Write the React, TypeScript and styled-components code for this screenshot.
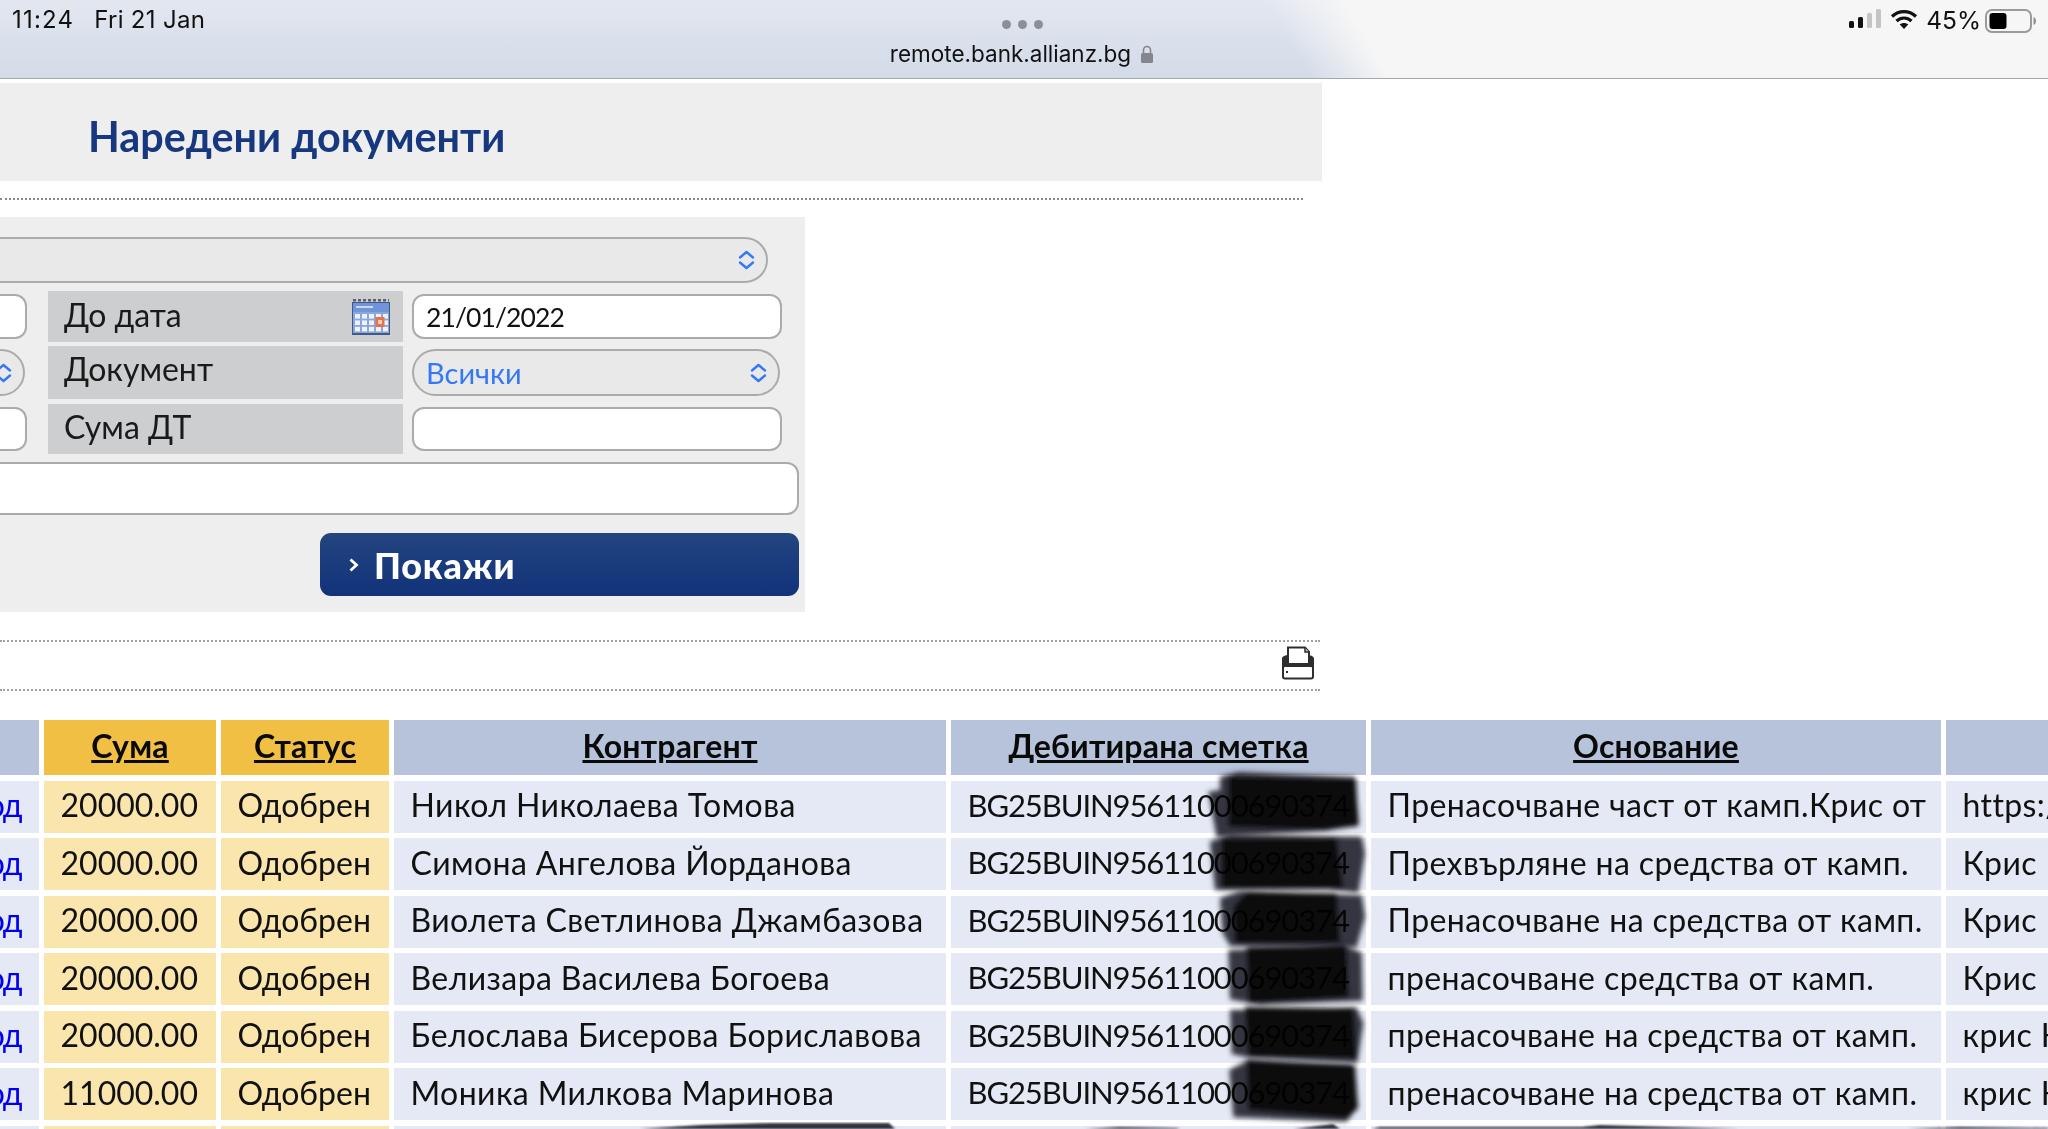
import React from 'react';
import styled, { createGlobalStyle } from 'styled-components';

const FONT = `Lato, "Open Sans", "Noto Sans", sans-serif`;
const UI_FONT = `Inter, "Liberation Sans", sans-serif`;

const GlobalStyle = createGlobalStyle`
  html, body {
    margin: 0;
    padding: 0;
    width: 2048px;
    height: 1129px;
    overflow: hidden;
    background: #fff;
  }
  * {
    box-sizing: border-box;
  }
`;

const Page = styled.div`
  width: 2048px;
  height: 1129px;
  overflow: hidden;
  font-family: ${FONT};
  color: #111;
`;

const StatusBar = styled.header`
  height: 79px;
  padding: 0 11px 0 12px;
  display: grid;
  grid-template-columns: 1fr auto 1fr;
  border-bottom: 1px solid #a4a8b0;
  background:
    linear-gradient(60deg, rgba(246, 246, 246, 0) 62.6%, #f6f6f6 66.4%),
    linear-gradient(180deg, #e3e7f0 0%, #d2dbe8 100%);
  font-family: ${UI_FONT};
  font-size: 22.5px;
  color: #111;
`;

const StatusLeft = styled.div`
  display: flex;
  gap: 20px;
  padding-top: 7px;
  font-size: 24px;
  letter-spacing: 0.3px;
  line-height: 26px;
`;

const StatusTime = styled.span`
  letter-spacing: 1.2px;
`;

const AddressBlock = styled.div`
  margin-right: 5px;
  display: flex;
  flex-direction: column;
  align-items: center;
`;

const Dots = styled.div`
  display: flex;
  gap: 7px;
  margin-top: 20px;
`;

const Dot = styled.span`
  width: 9px;
  height: 9px;
  border-radius: 50%;
  background: #8c8f98;
`;

const Address = styled.div`
  display: flex;
  align-items: center;
  gap: 9px;
  margin-top: 11px;
  line-height: 28px;
`;

const StatusRight = styled.div`
  display: flex;
  justify-content: flex-end;
  align-items: flex-start;
  padding-top: 9px;
  gap: 8px;
  font-size: 24.5px;
  line-height: 23px;
`;

const BatteryGap = styled.span`
  margin-right: -4px;
`;

const Content = styled.main`
  padding-top: 4px;
`;

const TitleBar = styled.div`
  width: 1322px;
  height: 98px;
  padding: 7px 0 0 88px;
  display: flex;
  align-items: center;
  background: #eeeeee;
`;

const Title = styled.h1`
  margin: 0;
  font-size: 41.3px;
  font-weight: 700;
  color: #17387e;
`;

const DottedLine = styled.div<{ $width: number; $top: number; $color?: string }>`
  width: ${(p) => p.$width}px;
  margin-top: ${(p) => p.$top}px;
  border-top: 2px dotted ${(p) => p.$color ?? '#8a8a8a'};
`;

const FormPanel = styled.section`
  width: 805px;
  margin-top: 17px;
  padding: 20px 0 16px;
  background: #eeeeee;
  overflow: hidden;
  display: flex;
  flex-direction: column;
`;

const FormRow = styled.div<{ $height: number; $top: number; $right: number }>`
  height: ${(p) => p.$height}px;
  margin-top: ${(p) => p.$top}px;
  padding-right: ${(p) => p.$right}px;
  display: flex;
  justify-content: flex-end;
  align-items: center;
  flex-shrink: 0;
`;

const Field = styled.div<{ $width: number; $height: number; $right?: number }>`
  width: ${(p) => p.$width}px;
  height: ${(p) => p.$height}px;
  margin-right: ${(p) => p.$right ?? 0}px;
  padding: 0 12px;
  flex-shrink: 0;
  display: flex;
  align-items: center;
  border: 2px solid #ababab;
  border-radius: 12px;
  background: #fff;
  font-size: 26.5px;
  letter-spacing: -0.9px;
`;

const SelectField = styled(Field)`
  justify-content: space-between;
  border-radius: 24px;
  padding-right: 10px;
  background: #e9e9e9;
  color: #3478f6;
  font-size: 29px;
  letter-spacing: 0;
`;

const FieldLabel = styled.div<{ $lift?: number }>`
  width: 355px;
  height: 100%;
  margin-right: 9px;
  padding: 0 13px ${(p) => p.$lift ?? 5}px 16px;
  flex-shrink: 0;
  display: flex;
  justify-content: space-between;
  align-items: center;
  background: #cdced0;
  font-size: 32px;
  color: #1a1a1a;
`;

const ShowButton = styled.button`
  width: 479px;
  height: 63px;
  padding: 0 0 0 28px;
  display: flex;
  align-items: center;
  gap: 15px;
  border: 0;
  border-radius: 11px;
  background: linear-gradient(180deg, #23457f 0%, #12327a 100%);
  color: #fff;
  font-family: ${FONT};
  font-size: 36px;
  font-weight: 900;
  letter-spacing: 0.8px;
`;

const Toolbar = styled.div`
  width: 1320px;
  height: 47px;
  padding: 0 5px 6px 0;
  display: flex;
  justify-content: flex-end;
  align-items: center;
`;

const TableWrap = styled.div`
  position: relative;
  margin-top: 29px;
  width: 2048px;
  height: 409px;
  overflow: hidden;
`;

const Table = styled.div`
  display: grid;
  grid-template-columns: 39px 172px 168px 552px 415px 570px 200px;
  grid-template-rows: 55px;
  grid-auto-rows: 52px;
  column-gap: 5px;
  row-gap: 5.5px;
`;

const HeadCell = styled.div<{ $sorted?: boolean }>`
  padding-bottom: 4px;
  display: flex;
  justify-content: center;
  align-items: center;
  background: ${(p) => (p.$sorted ? '#f2bf45' : '#b7c3da')};
  font-size: 32px;
  font-weight: 700;
  letter-spacing: 0.2px;
  text-decoration: underline;
  color: #0a0a0a;
`;

const Cell = styled.div<{ $sorted?: boolean; $end?: boolean; $kind?: 'text' | 'account' }>`
  padding: 0 ${(p) => (p.$end ? 18 : 0)}px 4px ${(p) => (p.$end ? 0 : 16.5)}px;
  display: flex;
  justify-content: ${(p) => (p.$end ? 'flex-end' : 'flex-start')};
  align-items: center;
  white-space: nowrap;
  overflow: hidden;
  background: ${(p) => (p.$sorted ? '#fae5ac' : '#e5e9f5')};
  font-size: ${(p) => (p.$kind === 'account' ? 31 : 32)}px;
  letter-spacing: ${(p) => (p.$kind === 'account' ? '-1.1px' : p.$kind === 'text' ? '0.4px' : '0')};
  color: #111;
`;

const DocLink = styled.a`
  color: #0000ee;
  letter-spacing: -1.5px;
  text-decoration: underline;
`;

const InkLayer = styled.svg`
  position: absolute;
  top: 0;
  left: 0;
  pointer-events: none;
  mix-blend-mode: multiply;
`;

const rows = [
  { sum: '20000.00', name: 'Никол Николаева Томова', reason: 'Пренасочване част от камп.Крис от', note: 'https://www' },
  { sum: '20000.00', name: 'Симона Ангелова Йорданова', reason: 'Прехвърляне на средства от камп.', note: 'Крис Николова' },
  { sum: '20000.00', name: 'Виолета Светлинова Джамбазова', reason: 'Пренасочване на средства от камп.', note: 'Крис Николова' },
  { sum: '20000.00', name: 'Велизара Василева Богоева', reason: 'пренасочване средства от камп.', note: 'Крис Николова' },
  { sum: '20000.00', name: 'Белослава Бисерова Бориславова', reason: 'пренасочване на средства от камп.', note: 'крис Николова' },
  { sum: '11000.00', name: 'Моника Милкова Маринова', reason: 'пренасочване на средства от камп.', note: 'крис Николова' },
];

// marker strokes over the account numbers, coords taken from a 3x crop at (1180,760)
const inkStrokes = [
  { outer: 'M85 95L120 90L120 50L175 36L525 50L538 195L440 212L110 232Z', inner: 'M145 48L528 58L534 198L430 210L145 200Z' },
  { outer: 'M90 245L150 222L545 230L555 280L535 398L440 388L105 390Z', inner: 'M125 235L470 235L490 385L125 385Z' },
  { outer: 'M120 415L180 392L545 406L555 470L530 562L150 558L128 520Z', inner: 'M200 396L470 400L480 548L165 550L160 440Z' },
  { outer: 'M145 570L490 552L545 578L548 722L240 734L150 718Z', inner: 'M200 560L500 555L505 712L205 730Z' },
  { outer: 'M150 750L530 742L550 790L532 908L200 892L155 882Z', inner: 'M195 740L520 745L530 895L205 890Z' },
  { outer: 'M148 930L200 902L515 912L534 1040L500 1085L160 1072Z', inner: 'M200 898L525 916L534 1045L500 1075L205 1050Z' },
];

const inkEdges = [
  'M640 409L700 405L771 403L889 403L895 409Z',
  'M1085 409L1120 407L1176 408L1180 409Z',
  'M1294 409L1333 404L1340 409Z',
  'M1372 409L1380 407L1582 407L1600 405L1739 409Z',
  'M1908 409L1960 407L2048 408L2048 409Z',
];

const Chevrons = ({ width = 19 }: { width?: number }) => (
  <svg width={width} height="20" viewBox="0 0 19 20" fill="none" stroke="#3478f6" strokeWidth="2.4" strokeLinecap="round" strokeLinejoin="round">
    <path d="M3 7.5L9.5 2L16 7.5" />
    <path d="M3 12.5L9.5 18L16 12.5" />
  </svg>
);

const LockIcon = () => (
  <svg width="14" height="18" viewBox="0 0 14 18">
    <path d="M3.5 8V5a3.5 3.5 0 0 1 7 0v3" fill="none" stroke="#85868c" strokeWidth="1.6" />
    <rect x="1" y="8" width="12" height="10" rx="1.5" fill="#85868c" />
  </svg>
);

const SignalIcon = () => (
  <svg width="33" height="20" viewBox="0 0 33 20">
    <rect x="0" y="12" width="5" height="7" rx="1.5" fill="#111" />
    <rect x="9" y="8" width="5" height="11" rx="1.5" fill="#111" />
    <rect x="18" y="4" width="5" height="15" rx="1.5" fill="#c4c4c4" />
    <rect x="27" y="0" width="5" height="19" rx="1.5" fill="#c4c4c4" />
  </svg>
);

const WifiIcon = () => (
  <svg width="28" height="20" viewBox="0 0 28 20" fill="none" stroke="#111" strokeWidth="3.2">
    <path d="M2 7.5C9 1 19 1 26 7.5" />
    <path d="M6.5 12C11 8 17 8 21.5 12" />
    <path d="M14 20L9.8 15.6C12 13.6 16 13.6 18.2 15.6Z" fill="#111" stroke="none" />
  </svg>
);

const BatteryIcon = () => (
  <svg width="52" height="24" viewBox="0 0 52 24">
    <rect x="1" y="1" width="45" height="22" rx="6" fill="none" stroke="#9a9a9a" strokeWidth="2" />
    <rect x="4.5" y="4" width="17" height="16" rx="3" fill="#000" />
    <path d="M48.5 8C50.5 9 51 10.5 51 12S50.5 15 48.5 16Z" fill="#8f8f8f" />
  </svg>
);

const CalendarIcon = () => (
  <svg width="38" height="36" viewBox="0 0 38 36" style={{ marginBottom: -5 }}>
    <rect x="0" y="3" width="38" height="33" fill="#3f5a88" />
    <rect x="1" y="4" width="36" height="9" fill="#6f94da" />
    <rect x="1" y="13" width="36" height="21" fill="#8aa6dc" />
    <path d="M1 1h36" stroke="#5c5f66" strokeWidth="3" strokeDasharray="3 2" />
    <rect x="4" y="7" width="17" height="2" fill="#c9d8f4" />
    {[0, 1, 2].map((r) =>
      [0, 1, 2, 3, 4].map((c) => <rect key={`${r}-${c}`} x={3 + c * 7} y={15 + r * 6.4} width="5" height="4.6" fill="#eef2fb" />)
    )}
    <rect x="23.5" y="18" width="9" height="10" fill="#e8734a" />
    <rect x="26" y="21" width="4" height="4" fill="#f3cfc0" />
  </svg>
);

const PrinterIcon = () => (
  <svg width="34" height="34" viewBox="0 0 34 34">
    <path d="M1 28V13C1 11 2 10 6 9V20H28V9C32 10 33 11 33 13V28Z" fill="#2e2e2e" />
    <path d="M7 1.5H24L28 6V18H7Z" fill="#fff" stroke="#2e2e2e" strokeWidth="2" />
    <path d="M24 1.5V6H28" fill="#c8c8c8" stroke="#2e2e2e" strokeWidth="1.5" />
    <rect x="2" y="20" width="30" height="12.5" rx="2" fill="#fff" stroke="#2e2e2e" strokeWidth="2" />
    <rect x="5" y="25" width="2" height="2" fill="#2e2e2e" />
  </svg>
);

const ButtonChevron = () => (
  <svg width="11" height="14" viewBox="0 0 11 14" fill="none" stroke="#fff" strokeWidth="2.8">
    <path d="M2.5 1.5L8.5 7L2.5 12.5" />
  </svg>
);

export default function App() {
  return (
    <Page>
      <GlobalStyle />
      <StatusBar>
        <StatusLeft>
          <StatusTime>11:24</StatusTime>
          <span>Fri 21 Jan</span>
        </StatusLeft>
        <AddressBlock>
          <Dots>
            <Dot />
            <Dot />
            <Dot />
          </Dots>
          <Address>
            remote.bank.allianz.bg
            <LockIcon />
          </Address>
        </AddressBlock>
        <StatusRight>
          <SignalIcon />
          <WifiIcon />
          <BatteryGap>45%</BatteryGap>
          <BatteryIcon />
        </StatusRight>
      </StatusBar>

      <Content>
        <TitleBar>
          <Title>Наредени документи</Title>
        </TitleBar>
        <DottedLine $width={1303} $top={17} />

        <FormPanel>
          <FormRow $height={46} $top={0} $right={37}>
            <SelectField $width={900} $height={46}>
              <span />
              <Chevrons />
            </SelectField>
          </FormRow>
          <FormRow $height={51} $top={8} $right={23}>
            <Field $width={60} $height={45} $right={21} />
            <FieldLabel>
              До дата
              <CalendarIcon />
            </FieldLabel>
            <Field $width={370} $height={45}>21/01/2022</Field>
          </FormRow>
          <FormRow $height={53} $top={4} $right={25}>
            <SelectField $width={60} $height={47} $right={23}>
              <span />
              <Chevrons />
            </SelectField>
            <FieldLabel $lift={8}>Документ</FieldLabel>
            <SelectField $width={368} $height={47}>
              Всички
              <Chevrons />
            </SelectField>
          </FormRow>
          <FormRow $height={50} $top={5} $right={23}>
            <Field $width={60} $height={44} $right={21} />
            <FieldLabel>Сума ДТ</FieldLabel>
            <Field $width={370} $height={44} />
          </FormRow>
          <FormRow $height={53} $top={8} $right={6}>
            <Field $width={900} $height={53} />
          </FormRow>
          <FormRow $height={63} $top={18} $right={6}>
            <ShowButton>
              <ButtonChevron />
              Покажи
            </ShowButton>
          </FormRow>
        </FormPanel>

        <DottedLine $width={1320} $top={28} $color="#a0a0a0" />
        <Toolbar>
          <PrinterIcon />
        </Toolbar>
        <DottedLine $width={1320} $top={0} $color="#a0a0a0" />

        <TableWrap>
          <Table>
            <HeadCell />
            <HeadCell $sorted>Сума</HeadCell>
            <HeadCell $sorted>Статус</HeadCell>
            <HeadCell>Контрагент</HeadCell>
            <HeadCell>Дебитирана сметка</HeadCell>
            <HeadCell>Основание</HeadCell>
            <HeadCell />
            {rows.map((row, i) => (
              <React.Fragment key={i}>
                <Cell $end>
                  <DocLink>Превод</DocLink>
                </Cell>
                <Cell $sorted $end>{row.sum}</Cell>
                <Cell $sorted>Одобрен</Cell>
                <Cell $kind="text">{row.name}</Cell>
                <Cell $kind="account">BG25BUIN95611000690374</Cell>
                <Cell $kind="text">{row.reason}</Cell>
                <Cell $kind="text">{row.note}</Cell>
              </React.Fragment>
            ))}
            <Cell />
            <Cell $sorted />
            <Cell $sorted />
            <Cell />
            <Cell />
            <Cell />
            <Cell />
          </Table>
          <InkLayer width="2048" height="409" viewBox="0 0 2048 409">
            <defs>
              <filter id="ink" x="-10%" y="-10%" width="120%" height="120%">
                <feGaussianBlur stdDeviation="8" />
              </filter>
              <filter id="edge">
                <feGaussianBlur stdDeviation="0.8" />
              </filter>
            </defs>
            <g transform="translate(1180 40) scale(0.3333)">
              {inkStrokes.map((stroke, i) => (
                <g key={i} filter="url(#ink)">
                  <path d={stroke.outer} fill="#2e2f38" opacity="0.95" />
                  <path d={stroke.inner} fill="#0c0c10" />
                </g>
              ))}
            </g>
            <g filter="url(#edge)" fill="#33343c">
              {inkEdges.map((d) => (
                <path key={d} d={d} />
              ))}
            </g>
          </InkLayer>
        </TableWrap>
      </Content>
    </Page>
  );
}
